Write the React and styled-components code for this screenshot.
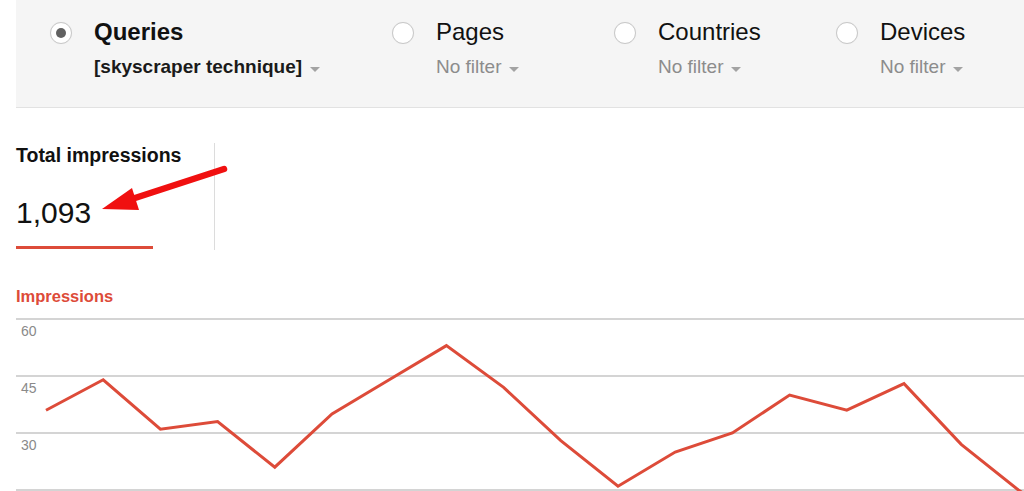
import React from "react";
import styled, { createGlobalStyle } from "styled-components";

const GlobalStyle = createGlobalStyle`
  html, body {
    margin: 0;
    padding: 0;
    background: #ffffff;
  }
  body {
    font-family: "Liberation Sans", Arial, sans-serif;
    color: #222;
  }
`;

const Page = styled.div`
  position: relative;
  width: 1024px;
  height: 491px;
  overflow: hidden;
`;

const FilterBar = styled.div`
  box-sizing: border-box;
  height: 108px;
  margin-left: 16px;
  padding: 18px 0 0 34px;
  display: flex;
  background: #f5f5f5;
  border-bottom: 1px solid #e2e2e2;
`;

const FilterItem = styled.div`
  width: ${({ width }) => width}px;
  flex-shrink: 0;
  display: flex;
  align-items: flex-start;
`;

const Radio = styled.span`
  box-sizing: border-box;
  width: 22px;
  height: 22px;
  margin-top: 4px;
  flex-shrink: 0;
  border-radius: 50%;
  border: 1px solid #c8c8c8;
  background: #fff;
  box-shadow: 0 0 1px rgba(0, 0, 0, 0.08);
  display: flex;
  align-items: center;
  justify-content: center;

  &::after {
    content: "";
    width: 10px;
    height: 10px;
    border-radius: 50%;
    background: #616161;
    display: ${({ checked }) => (checked ? "block" : "none")};
  }
`;

const FilterText = styled.div`
  margin-left: 22px;
  display: flex;
  flex-direction: column;
`;

const FilterTitle = styled.div`
  font-size: 24px;
  line-height: 28px;
  font-weight: ${({ active }) => (active ? 700 : 400)};
  color: #111;
`;

const FilterValue = styled.div`
  margin-top: 9px;
  font-size: 19px;
  line-height: 24px;
  font-weight: ${({ active }) => (active ? 700 : 400)};
  color: ${({ active }) => (active ? "#1a1a1a" : "#8c8c8c")};
  display: flex;
  align-items: center;
`;

const Caret = styled.span`
  width: 0;
  height: 0;
  margin-left: 8px;
  margin-top: 4px;
  border-left: 5px solid transparent;
  border-right: 5px solid transparent;
  border-top: 5px solid #a3a3a3;
`;

const StatsRow = styled.div`
  margin: 35px 0 0 16px;
  display: flex;
`;

const StatTile = styled.div`
  box-sizing: border-box;
  width: 199px;
  height: 107px;
  border-right: 1px solid #dcdcdc;
  display: flex;
  flex-direction: column;
`;

const StatLabel = styled.div`
  font-size: 19.5px;
  line-height: 24px;
  font-weight: 700;
  color: #111;
`;

const StatValue = styled.div`
  margin-top: 28px;
  font-size: 30px;
  line-height: 36px;
  color: #111;
`;

const StatBar = styled.div`
  width: 137px;
  height: 3px;
  margin-top: 15px;
  background: #dd4b39;
`;

const Annotation = styled.svg`
  position: absolute;
  left: 95px;
  top: 161px;
  overflow: visible;
`;

const ChartTitle = styled.div`
  margin: 36px 0 0 16px;
  font-size: 16.5px;
  line-height: 20px;
  font-weight: 700;
  color: #dd4b39;
`;

const ChartArea = styled.svg`
  display: block;
  margin: 12px 0 0 16px;
  overflow: visible;
`;

const filters = [
  { title: "Queries", value: "[skyscraper technique]", active: true, width: 342 },
  { title: "Pages", value: "No filter", width: 222 },
  { title: "Countries", value: "No filter", width: 222 },
  { title: "Devices", value: "No filter", width: 222 },
];

const impressions = [36, 44, 31, 33, 21, 35, 44, 53, 42, 28, 16, 25, 30, 40, 36, 43, 27, 15, 5];

const CHART_W = 1008;
const CHART_H = 172;
const STEP = 57.2;
const xAt = (i) => 30 + i * STEP;
const yAt = (v) => 1 + (60 - v) * 3.8;

function Chart() {
  const ticks = [60, 45, 30, 15];
  const points = impressions.map((v, i) => `${xAt(i)},${yAt(v)}`).join(" ");
  return (
    <ChartArea width={CHART_W} height={CHART_H} viewBox={`0 0 ${CHART_W} ${CHART_H}`}>
      {ticks.map((t) => (
        <g key={t}>
          <line x1="0" x2={CHART_W} y1={yAt(t)} y2={yAt(t)} stroke="#d4d4d4" strokeWidth="2" />
          {t > 15 && (
            <text
              x="5"
              y={yAt(t) + 17}
              fontSize="14"
              fill="#8a8a8a"
              fontFamily="Liberation Sans, Arial, sans-serif"
            >
              {t}
            </text>
          )}
        </g>
      ))}
      <polyline
        points={points}
        fill="none"
        stroke="#dd4b39"
        strokeWidth="3"
        strokeLinejoin="miter"
      />
    </ChartArea>
  );
}

export default function App() {
  return (
    <Page>
      <GlobalStyle />
      <FilterBar>
        {filters.map((f) => (
          <FilterItem key={f.title} width={f.width}>
            <Radio checked={f.active} />
            <FilterText>
              <FilterTitle active={f.active}>{f.title}</FilterTitle>
              <FilterValue active={f.active}>
                {f.value}
                <Caret />
              </FilterValue>
            </FilterText>
          </FilterItem>
        ))}
      </FilterBar>

      <StatsRow>
        <StatTile>
          <StatLabel>Total impressions</StatLabel>
          <StatValue>1,093</StatValue>
          <StatBar />
        </StatTile>
      </StatsRow>

      {/* red arrow pointing at the total */}
      <Annotation width="140" height="55" viewBox="0 0 140 55">
        <line x1="129" y1="8" x2="40" y2="37" stroke="#f01010" strokeWidth="6.5" strokeLinecap="round" />
        <polygon points="7,48 37,27 44,49" fill="#f01010" />
      </Annotation>

      <ChartTitle>Impressions</ChartTitle>
      <Chart />
    </Page>
  );
}
